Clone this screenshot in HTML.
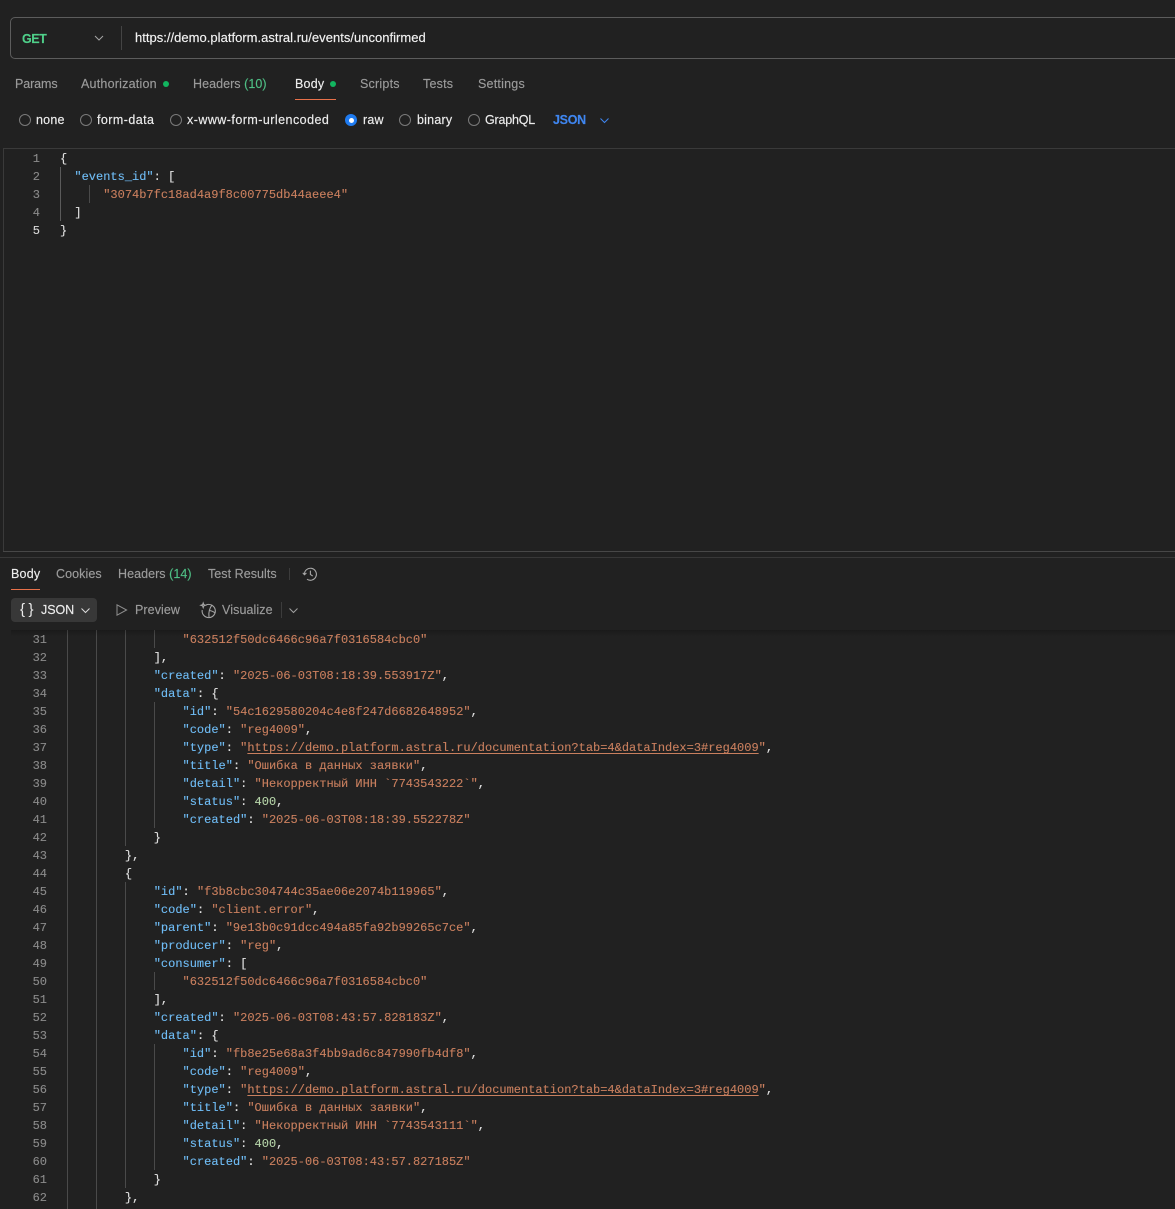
<!DOCTYPE html>
<html lang="ru">
<head>
<meta charset="utf-8">
<title>Postman</title>
<style>
html,body{margin:0;padding:0;background:#212121;}
body{position:relative;width:1175px;height:1209px;overflow:hidden;font-family:"Liberation Sans","Noto Sans CJK SC",sans-serif;color:#9a9a9a;}
.a{position:absolute;}
.t{position:absolute;font-size:12.5px;line-height:16px;white-space:nowrap;letter-spacing:.22px;color:#9b9b9b;-webkit-text-stroke:.15px currentColor;}
.w{color:#ededed;}
.g{color:#4fbf85;}
.hl{position:absolute;left:0;width:1175px;height:1px;}
.dot{position:absolute;width:6px;height:6px;border-radius:50%;background:#12b55f;}
.r{position:absolute;width:10px;height:10px;border:1px solid #7a7a7a;border-radius:50%;top:114px;}
.v{position:absolute;width:1px;background:#4a4a4a;}
pre{position:absolute;margin:0;font-family:"Liberation Mono","DejaVu Sans Mono",monospace;font-size:12px;line-height:18px;color:#e0e0e0;-webkit-text-stroke:.12px currentColor;}
.num{color:#8a8a8a;text-align:right;}
.k{color:#6fbcf5;}
.s{color:#c97f5e;}
.n{color:#b5d3a8;}
.u{text-decoration:underline;text-decoration-thickness:1px;text-underline-offset:2px;}
svg{position:absolute;overflow:visible;}
</style>
</head>
<body>

<!-- URL bar -->
<div class="a" style="left:10px;top:17px;width:1180px;height:40px;border:1px solid #5c5c5c;border-radius:5px;"></div>
<div class="t" style="left:22px;top:31px;color:#4fd08a;font-weight:bold;letter-spacing:-.45px;">GET</div>
<svg style="left:94px;top:35px" width="10" height="6" viewBox="0 0 10 6"><path d="M1 1l4 4 4-4" fill="none" stroke="#a5a5a5" stroke-width="1"/></svg>
<div class="a" style="left:121px;top:26px;width:1px;height:24px;background:#444"></div>
<div class="t" style="left:135px;top:30px;font-size:13px;color:#f2f2f2;letter-spacing:.02px;">https://demo.platform.astral.ru/events/unconfirmed</div>

<!-- Request tabs -->
<div class="t" style="left:15px;top:76px;letter-spacing:-.1px;">Params</div>
<div class="t" style="left:81px;top:76px;">Authorization</div>
<div class="dot" style="left:163px;top:81px;"></div>
<div class="t" style="left:193px;top:76px;letter-spacing:.05px;">Headers <span class="g">(10)</span></div>
<div class="t w" style="left:295px;top:76px;">Body</div>
<div class="dot" style="left:330px;top:81px;"></div>
<div class="a" style="left:295px;top:99px;width:41px;height:1px;background:#e8714a"></div>
<div class="t" style="left:360px;top:76px;">Scripts</div>
<div class="t" style="left:423px;top:76px;">Tests</div>
<div class="t" style="left:478px;top:76px;">Settings</div>

<!-- Body type radios -->
<div class="r" style="left:19px;"></div>
<div class="t w" style="left:36px;top:112px;">none</div>
<div class="r" style="left:80px;"></div>
<div class="t w" style="left:97px;top:112px;letter-spacing:.44px;">form-data</div>
<div class="r" style="left:170px;"></div>
<div class="t w" style="left:187px;top:112px;letter-spacing:.46px;">x-www-form-urlencoded</div>
<div class="a" style="left:345px;top:114px;width:12px;height:12px;border-radius:50%;background:#1f7bf0;"></div>
<div class="a" style="left:348.5px;top:117.5px;width:5px;height:5px;border-radius:50%;background:#fff;"></div>
<div class="t w" style="left:363px;top:112px;">raw</div>
<div class="r" style="left:399px;"></div>
<div class="t w" style="left:417px;top:112px;">binary</div>
<div class="r" style="left:468px;"></div>
<div class="t w" style="left:485px;top:112px;letter-spacing:-.2px;">GraphQL</div>
<div class="t" style="left:553px;top:112px;color:#3f86f0;font-weight:bold;letter-spacing:-.28px;">JSON</div>
<svg style="left:600px;top:118px" width="9" height="5" viewBox="0 0 9 5"><path d="M.5.5l4 4 4-4" fill="none" stroke="#3f86f0" stroke-width="1"/></svg>

<!-- Request editor -->
<div class="hl" style="left:3px;top:148px;background:#3a3a3a;"></div>
<div class="a" style="left:3px;top:148px;width:1px;height:404px;background:#3a3a3a;"></div>
<div class="hl" style="left:3px;top:551px;background:#474747;"></div>
<div class="hl" style="top:557px;background:#383838;"></div>
<pre class="num" style="left:10px;top:150px;width:30px;">1
2
3
4
<span style="color:#d8d8d8">5</span></pre>
<div class="v" style="left:60px;top:167px;height:54px;background:#5a5a5a"></div>
<div class="v" style="left:89px;top:185px;height:18px;"></div>
<pre style="left:60px;top:150px;">{
  <span class="k">"events_id"</span>: [
      <span class="s">"3074b7fc18ad4a9f8c00775db44aeee4"</span>
  ]
}</pre>

<!-- Response tabs -->
<div class="t w" style="left:11px;top:566px;">Body</div>
<div class="a" style="left:11px;top:589px;width:29px;height:1px;background:#e8714a"></div>
<div class="t" style="left:56px;top:566px;letter-spacing:.08px;">Cookies</div>
<div class="t" style="left:118px;top:566px;letter-spacing:.05px;">Headers <span class="g">(14)</span></div>
<div class="t" style="left:208px;top:566px;letter-spacing:.05px;">Test Results</div>
<div class="a" style="left:289px;top:568px;width:1px;height:12px;background:#3c3c3c"></div>
<svg style="left:302px;top:566px" width="16" height="16" viewBox="0 0 16 16" fill="none" stroke="#a8a8a8" stroke-width="1.1"><path d="M2.4 8.5A6 6 0 1 1 5 13.2"/><path d="M.8 6.8l1.6 1.9 2-1.6"/><path d="M8.4 4.6v3.9l2.3 1.5"/></svg>

<!-- Response toolbar -->
<div class="a" style="left:11px;top:598px;width:86px;height:24px;border-radius:4px;background:#383838;"></div>
<div class="t w" style="left:20px;top:602px;font-size:15px;letter-spacing:3.5px;-webkit-text-stroke:0;">{}</div>
<div class="t w" style="left:41px;top:602px;letter-spacing:-.05px;">JSON</div>
<svg style="left:81px;top:608px" width="9" height="5" viewBox="0 0 9 5"><path d="M.5.5l4 4 4-4" fill="none" stroke="#dcdcdc" stroke-width="1"/></svg>
<svg style="left:116px;top:604px" width="12" height="12" viewBox="0 0 12 12"><path d="M1 .8v10.4l9.6-5.2z" fill="none" stroke="#8f8f8f" stroke-width="1"/></svg>
<div class="t" style="left:135px;top:602px;letter-spacing:.08px;">Preview</div>
<svg style="left:200px;top:602px" width="17" height="17" viewBox="0 0 17 17" fill="none" stroke="#a5a5a5" stroke-width="1.1"><path d="M6 3A6.6 6.6 0 1 1 2.2 8"/><path d="M12.2 2.8C9.5 6 8.4 10 9 15"/><path d="M9 8.5c2.2.2 4.4 1 6.2 2.6"/><path d="M3.2 1l.6 1.7 1.7.6-1.7.6-.6 1.7-.6-1.7L.9 3.3l1.7-.6z"/></svg>
<div class="t" style="left:222px;top:602px;letter-spacing:.1px;">Visualize</div>
<div class="a" style="left:281px;top:602px;width:1px;height:16px;background:#3c3c3c"></div>
<svg style="left:289px;top:608px" width="9" height="5" viewBox="0 0 9 5"><path d="M.5.5l4 4 4-4" fill="none" stroke="#a0a0a0" stroke-width="1"/></svg>

<!-- Response editor guides -->
<div class="v" style="left:67px;top:630px;height:579px;"></div>
<div class="v" style="left:96px;top:630px;height:579px;"></div>
<div class="v" style="left:125px;top:630px;height:216px;"></div>
<div class="v" style="left:125px;top:882px;height:306px;"></div>
<div class="v" style="left:154px;top:630px;height:18px;"></div>
<div class="v" style="left:154px;top:702px;height:126px;"></div>
<div class="v" style="left:154px;top:972px;height:18px;"></div>
<div class="v" style="left:154px;top:1044px;height:126px;"></div>
<div class="a" style="left:11px;top:630px;width:1164px;height:6px;background:linear-gradient(rgba(0,0,0,.22),rgba(0,0,0,0));"></div>

<pre class="num" style="left:10px;top:631px;width:37px;">31
32
33
34
35
36
37
38
39
40
41
42
43
44
45
46
47
48
49
50
51
52
53
54
55
56
57
58
59
60
61
62</pre>

<pre style="left:38.5px;top:631px;">                    <span class="s">"632512f50dc6466c96a7f0316584cbc0"</span>
                ],
                <span class="k">"created"</span>: <span class="s">"2025-06-03T08:18:39.553917Z"</span>,
                <span class="k">"data"</span>: {
                    <span class="k">"id"</span>: <span class="s">"54c1629580204c4e8f247d6682648952"</span>,
                    <span class="k">"code"</span>: <span class="s">"reg4009"</span>,
                    <span class="k">"type"</span>: <span class="s">"<span class="u">https://demo.platform.astral.ru/documentation?tab=4&amp;dataIndex=3#reg4009</span>"</span>,
                    <span class="k">"title"</span>: <span class="s">"Ошибка в данных заявки"</span>,
                    <span class="k">"detail"</span>: <span class="s">"Некорректный ИНН `7743543222`"</span>,
                    <span class="k">"status"</span>: <span class="n">400</span>,
                    <span class="k">"created"</span>: <span class="s">"2025-06-03T08:18:39.552278Z"</span>
                }
            },
            {
                <span class="k">"id"</span>: <span class="s">"f3b8cbc304744c35ae06e2074b119965"</span>,
                <span class="k">"code"</span>: <span class="s">"client.error"</span>,
                <span class="k">"parent"</span>: <span class="s">"9e13b0c91dcc494a85fa92b99265c7ce"</span>,
                <span class="k">"producer"</span>: <span class="s">"reg"</span>,
                <span class="k">"consumer"</span>: [
                    <span class="s">"632512f50dc6466c96a7f0316584cbc0"</span>
                ],
                <span class="k">"created"</span>: <span class="s">"2025-06-03T08:43:57.828183Z"</span>,
                <span class="k">"data"</span>: {
                    <span class="k">"id"</span>: <span class="s">"fb8e25e68a3f4bb9ad6c847990fb4df8"</span>,
                    <span class="k">"code"</span>: <span class="s">"reg4009"</span>,
                    <span class="k">"type"</span>: <span class="s">"<span class="u">https://demo.platform.astral.ru/documentation?tab=4&amp;dataIndex=3#reg4009</span>"</span>,
                    <span class="k">"title"</span>: <span class="s">"Ошибка в данных заявки"</span>,
                    <span class="k">"detail"</span>: <span class="s">"Некорректный ИНН `7743543111`"</span>,
                    <span class="k">"status"</span>: <span class="n">400</span>,
                    <span class="k">"created"</span>: <span class="s">"2025-06-03T08:43:57.827185Z"</span>
                }
            },</pre>

</body>
</html>
